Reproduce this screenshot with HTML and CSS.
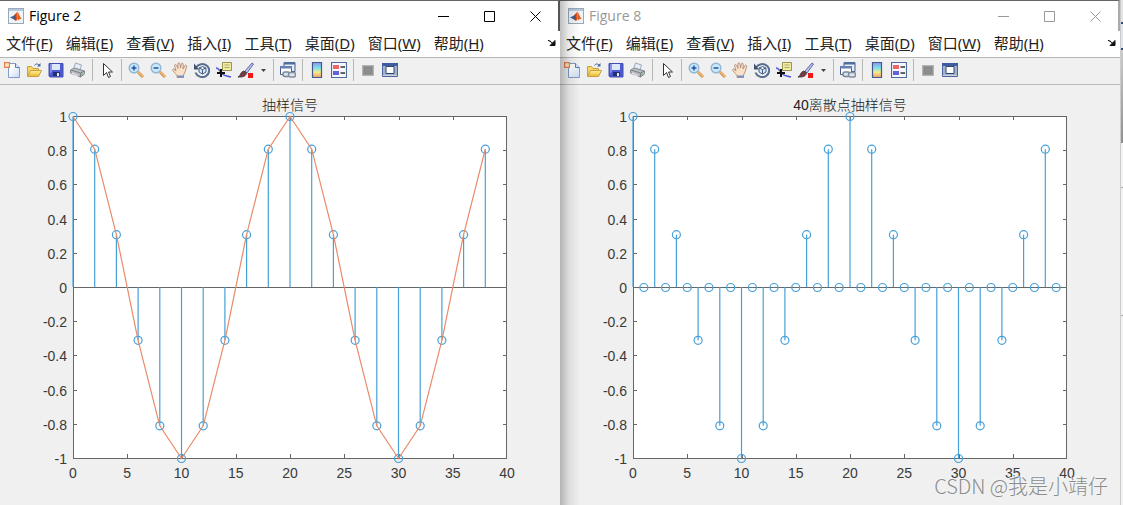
FILE: index.html
```html
<!DOCTYPE html>
<html lang="zh-CN">
<head>
<meta charset="utf-8">
<title>Figure 2</title>
<link rel="stylesheet" href="styles.css">
</head>
<body>
<svg class="defs" aria-hidden="true">
  <defs>
    <linearGradient id="paper" x1="0" y1="0" x2="1" y2="1"><stop offset="0.3" stop-color="#fff"/><stop offset="1" stop-color="#c5d8f2"/></linearGradient>
    <linearGradient id="folder" x1="0" y1="0" x2="0" y2="1"><stop offset="0" stop-color="#fff0a0"/><stop offset="1" stop-color="#e8b530"/></linearGradient>
    <linearGradient id="map" x1="0" y1="0" x2="0" y2="1"><stop offset="0" stop-color="#8796e8"/><stop offset="0.35" stop-color="#7de0ec"/><stop offset="0.65" stop-color="#f4ec8a"/><stop offset="1" stop-color="#f29a70"/></linearGradient>
    <linearGradient id="flame" x1="0" y1="0" x2="1" y2="0"><stop offset="0" stop-color="#7a1d12"/><stop offset="0.5" stop-color="#d9401c"/><stop offset="1" stop-color="#f08a30"/></linearGradient>
  </defs>
  <symbol id="i-logo" viewBox="0 0 16 16"><rect x=".5" y=".5" width="15" height="15" fill="#eef3f8" stroke="#9aa9b8"/><path d="M1 1h14v2H1z" fill="#b4c9dd"/><path d="M2 9.5 6 7.5l2 2-2 2z" fill="#2c67a5"/><path d="M6 7.5 9.5 3.500 10 11l-2 2-2-1.500 1-2z" fill="url(#flame)"/><path d="M9.500 3.500c1.500 2 2 5 4.500 8-1.500-.8-2.500-.5-4 1z" fill="#e0601f"/></symbol>
  <symbol id="i-new" viewBox="0 0 16 16"><path d="M4.500 1.500h7l4 4v10h-11z" fill="url(#paper)" stroke="#7f9cca"/><path d="M11.500 1.500v4h4" fill="#dce8f8" stroke="#587eb8"/><rect x=".5" y=".5" width="5" height="5" fill="#f7bc8d" stroke="#e37d54"/><path d="M3 1v4M1 3h4" stroke="#fff2bf"/></symbol>
  <symbol id="i-open" viewBox="0 0 16 16"><path d="M1.500 14.500v-10h4l1.500 2h5.500v2" fill="#f5d469" stroke="#c9a03c"/><path d="m1.500 14.500 3-6h11l-3 6z" fill="url(#folder)" stroke="#c9a03c"/><path d="M8.500 3.500c1-2 3-2 4.500-.5" fill="none" stroke="#416a9b"/><path d="M14.500 1v3.500H11z" fill="#416a9b"/></symbol>
  <symbol id="i-save" viewBox="0 0 16 16"><path d="M1 1.500h14v13.500h-13l-1-1z" fill="#4d5ad2" stroke="#4450b0"/><path d="M4 2h8v6H4z" fill="#dbe8fb"/><path d="M2 2h2v7L2 12z" fill="#8793ed"/><path d="M5 10h7v4H5z" fill="#252f69"/><path d="M9 11h2v3H9z" fill="#e7ebff"/></symbol>
  <symbol id="i-print" viewBox="0 0 16 16"><path d="m3.500 7 2-6 6 2-1.500 5z" fill="#e5edf8" stroke="#a0abc1"/><path d="m.5 8 4-2 10 3v3l-4 3-10-4z" fill="#b9bcc2" stroke="#858a92"/><path d="m1 8 9.500 3 4-2M10.500 11v4" fill="none" stroke="#7a7f87"/><path d="m2 11 6 3" stroke="#f5f5f5"/><path d="M11 12.500h2" stroke="#77b95b"/></symbol>
  <symbol id="i-arrow" viewBox="0 0 16 16"><path d="M4.500 1.500v12l3-3 2 5 2-1-2-4.500h4z" fill="#fff" stroke="#333"/></symbol>
  <symbol id="i-zin" viewBox="0 0 16 16"><path d="m10 10 5 5" stroke="#cf965a" stroke-width="3"/><path d="m10 9.500 5 5" stroke="#f2b76d" stroke-width="1.500"/><circle cx="6" cy="6" r="4.800" fill="#c9e9fa" stroke="#8fb5d6" stroke-width="1.400"/><path d="M3.500 6h5M6 3.500v5" stroke="#26519a" stroke-width="1.500"/></symbol>
  <symbol id="i-zout" viewBox="0 0 16 16"><path d="m10 10 5 5" stroke="#cf965a" stroke-width="3"/><path d="m10 9.500 5 5" stroke="#f2b76d" stroke-width="1.500"/><circle cx="6" cy="6" r="4.800" fill="#c9e9fa" stroke="#8fb5d6" stroke-width="1.400"/><path d="M3.500 6h5" stroke="#26519a" stroke-width="1.500"/></symbol>
  <symbol id="i-pan" viewBox="0 0 16 16"><path d="M5 15.500v-2C3 11 1 9 .5 7.500c1-1 2-.5 3.500 1.500L2.500 3.500c.2-1.300 1.500-1.300 2 0L6 6.500 5.800 2C6 .5 7.500.5 8 2l.5 4 .8-4c.5-1.300 2-1 2 .3L11 7l2-3.500c1-.8 2-.2 1.600 1.200L13 10l-1.500 3v2.500z" fill="#fae1c9" stroke="#b89480"/><path d="M5 14.500h7" stroke="#7290cb" stroke-width="2"/></symbol>
  <symbol id="i-rotate" viewBox="0 0 16 16"><path d="M2 5.500a7 6.500 0 1 1-.5 5" fill="none" stroke="#5b6f8e" stroke-width="2"/><path d="M0 1.500v6h5z" fill="#40546f"/><path d="m5 6 3.500-1.500L12 6v4l-3.500 2L5 10zM5 6l3.500 1.500L12 6M8.500 7.500V12" fill="#dbe8f7" stroke="#435e88"/></symbol>
  <symbol id="i-cursor" viewBox="0 0 16 16"><path d="M0 6c2 0 4 3 5 5 3 3 6 3 10 4" fill="none" stroke="#5454dd" stroke-width="1.400"/><path d="M6.500.5h9v8h-9z" fill="#f1eca0" stroke="#99934d"/><path d="M8.500 3h5M8.500 5.500h5" stroke="#aaa56c"/><path d="M5 7v8M1 11h8" stroke="#111" stroke-width="2"/></symbol>
  <symbol id="i-brush" viewBox="0 0 16 16"><path d="m7 9 7-8 1.500 1L9 11z" fill="#b5c6ed" stroke="#5e6aa6"/><path d="M0 15c3-1 2-5 6-6l2.500 2.500C7 15 4 15 0 15z" fill="#773d3d" stroke="#4d3540"/><path d="M10 11h5v5h-5z" fill="#f01818"/></symbol>
  <symbol id="i-link" viewBox="0 0 16 16"><path d="M4 .5h11v9H4z" fill="#e5effc" stroke="#435d8d"/><path d="M4 0h11v2.500H4z" fill="#526da2"/><path d="M.5 4.500h11v8H.5z" fill="#fff" stroke="#435d8d"/><path d="M0 4h12v2.500H0z" fill="#6680b4"/><rect x="3" y="10" width="7" height="4.500" rx="2" fill="#dde4eb" stroke="#758799" stroke-width="1.500"/><rect x="8.500" y="10.500" width="7" height="4.500" rx="2" fill="#dde4eb" stroke="#8090a0" stroke-width="1.500"/></symbol>
  <symbol id="i-colorbar" viewBox="0 0 16 16"><path d="M3.500.5h9v15h-9z" fill="url(#map)" stroke="#43598b" stroke-width="1.200"/></symbol>
  <symbol id="i-legend" viewBox="0 0 16 16"><path d="M.5.5h15v15H.5z" fill="#f7f9ff" stroke="#526a9e" stroke-width="1.200"/><path d="M2 3h6v4H2z" fill="#ee6666"/><path d="M2 9h6v4H2z" fill="#6262dc"/><path d="M9.500 5H14M9.500 11H14" stroke="#333" stroke-width="1.400"/></symbol>
  <symbol id="i-hide" viewBox="0 0 16 16"><path d="M2.500 3.500h11v10h-11z" fill="#999" stroke="#b0b0b0"/><path d="M4.500 5.500h7v6h-7z" fill="#8d8d8d" stroke="#858585"/></symbol>
  <symbol id="i-show" viewBox="0 0 16 16"><path d="M.5 1.500h15v13H.5z" fill="#a3b2d0" stroke="#4f659a"/><path d="M0 1h16v3H0z" fill="#405b9f"/><path d="M4 4.500h8v7H4z" fill="#fff" stroke="#34486f"/><path d="M1 13.500h14" stroke="#ced5e2"/></symbol>
</svg>

<main class="desktop">
  <section class="figure" data-name="Figure 2" data-title="抽样信号" data-step="2" data-curve="yes"></section>
  <section class="figure inactive" data-name="Figure 8" data-title="40离散点抽样信号" data-step="1"></section>
  <div class="behind"><div class="behind-top"></div><div class="behind-band"></div><div class="behind-list"></div><div class="behind-row"></div><div class="behind-row tall"></div></div>
  <div class="watermark">CSDN @我是小靖仔</div>
</main>
<script src="figure.js"></script>
</body>
</html>
```
FILE: styles.css
```css
* { box-sizing: border-box; }
body { margin: 0; background: #f0f0f0; font-family: "Noto Sans", "Noto Sans CJK SC", sans-serif; color: #000; }
button { font: inherit; color: inherit; background: none; border: 0; padding: 0; margin: 0; }
.defs { position: absolute; width: 0; height: 0; }
.desktop { position: relative; display: flex; min-height: 100vh; overflow: hidden; }
.figure { position: relative; flex: 1; min-width: 0; background: #f0f0f0; }
.figure.inactive::before { content: ""; position: absolute; z-index: 1; top: 0; bottom: 0; left: 0; width: 20px; background: linear-gradient(90deg, rgba(0,0,0,.25), rgba(0,0,0,.08) 45%, rgba(0,0,0,0)); pointer-events: none; }
.titlebar { display: flex; align-items: center; height: 31px; padding-left: 8px; background: #fff; border-top: 1px solid #666; border-right: 2px solid #555; }
.inactive .titlebar { color: #999; border-right-color: #aaa; }
.logo { width: 16px; height: 16px; }
.name { flex: 1; margin: 0 0 0 5px; font: 14px/20px "Open Sans", sans-serif; }
.control { width: 46px; height: 30px; display: grid; place-items: center; }
.control svg { width: 11px; height: 11px; }
.menubar { display: flex; align-items: center; gap: 13px; height: 26px; padding: 0 4px 2px 6px; background: #fff; font-size: 15px; line-height: 24px; color: #222; white-space: nowrap; }
.dock { width: 8px; height: 8px; margin-left: auto; display: flex; }
.dock svg { width: 8px; height: 8px; }
.toolbar { display: flex; align-items: center; height: 28px; padding: 0 0 2px 1px; background: #f0f0f0; border-top: 1px solid #b5b5b5; border-bottom: 1px solid #bbb; }
.tool { width: 22px; height: 24px; display: grid; place-items: center; }
.tool svg { width: 16px; height: 16px; }
.drop { width: 13px; height: 24px; display: grid; place-items: center; }
.drop svg { width: 5px; height: 3px; }
.sep { width: 7px; height: 22px; display: flex; justify-content: center; }
.sep::before { content: ""; width: 1px; background: #b8b8b8; }
.plot { display: block; width: 100%; height: auto; font-family: "Liberation Sans", Arial, sans-serif; }
.axes { fill: #fff; stroke: none; }
.frame { fill: none; stroke: #666; }
.tick-label { font-size: 14px; fill: #3a3a3a; }
.plot-title { font-family: "Liberation Sans", "Noto Sans CJK SC", sans-serif; font-size: 14px; font-weight: 300; fill: #222; }
.stem { stroke: #46a0d8; fill: none; stroke-width: 1.2; }
.curve { stroke: #ea8a68; fill: none; stroke-width: 1.2; }
.behind { display: flex; flex-direction: column; width: 3px; background: #f3f3f3; border-left: 1px solid #ccc; }
.behind-top { height: 22px; background: #e4e4e4; }
.behind-band { height: 28px; border-top: 2px solid #24507f; border-bottom: 2px solid #24507f; background: #dde6f0; }
.behind-list { height: 93px; background: linear-gradient(#ccc, #909090); }
.behind-row { height: 45px; border-bottom: 1px solid #aaa; }
.behind-row.tall { height: 128px; }
.watermark { position: absolute; z-index: 2; right: 15px; bottom: 5px; font: 300 20px/28px "Noto Sans CJK SC", sans-serif; color: #8c8c8c; text-shadow: -1px -1px 0 #f5f5f5; white-space: nowrap; }
```
FILE: figure.js
```js
const menus = [["文件", "F"], ["编辑", "E"], ["查看", "V"], ["插入", "I"], ["工具", "T"], ["桌面", "D"], ["窗口", "W"], ["帮助", "H"]];
const tools = ["new", "open", "save", "print", "|", "arrow", "|", "zin", "zout", "pan", "rotate", "cursor", "brush", "v", "|", "link", "|", "colorbar", "legend", "|", "hide", "show"];
const controls = [
  ["最小化", "M0 5.5h11"],
  ["最大化", "M.5.5h10v10H.5z"],
  ["关闭", "M.5.5l10 10M10.500.5l-10 10"]
];

// Axes box inside the plot's own coordinate system.
const box = { left: 73, top: 31, width: 434, height: 342 };
const px = n => box.left + n / 40 * box.width;
const py = v => box.top + (1 - v) / 2 * box.height;

function toolItem(t) {
  if (t === "|") return '<span class="sep"></span>';
  if (t === "v") return '<button class="drop" aria-label="brush options"><svg viewBox="0 0 5 3"><path d="M0 0h5L2.500 3z" fill="#444"/></svg></button>';
  return `<button class="tool" aria-label="${t}"><svg><use href="#i-${t}"/></svg></button>`;
}

function plot(title, step, curve) {
  const right = box.left + box.width, bottom = box.top + box.height;
  let ticks = "", labels = "", stems = "", points = [];
  for (let n = 0; n <= 40; n += 5) {
    const x = Math.round(px(n)) + (n < 40 ? 0.5 : -0.5);
    ticks += `M${x} ${bottom}v-4M${x} ${box.top}v4`;
    labels += `<text class="tick-label" x="${px(n)}" y="393" text-anchor="middle">${n}</text>`;
  }
  for (let k = -5; k <= 5; k++) {
    const y = Math.round(py(k / 5)) + 0.5;
    ticks += `M${box.left} ${y}h4M${right} ${y}h-4`;
    labels += `<text class="tick-label" x="67" y="${Math.round(py(k / 5)) + 6}" text-anchor="end">${k / 5}</text>`;
  }
  for (let n = 0; n < 40; n += step) {
    const v = n % 2 ? 0 : Math.cos(n * Math.PI / 10);
    const x = px(n), y = py(v) + 0.5;
    points.push(`${x},${y}`);
    stems += `<path class="stem" d="M${x} ${py(0)}V${y}"/><circle class="stem" cx="${x}" cy="${y}" r="4"/>`;
  }
  return `<svg class="plot" viewBox="0 0 560 420" role="img" aria-label="${title}">
    <rect class="axes" x="${box.left}" y="${box.top}" width="${box.width}" height="${box.height}"/>
    <path class="frame" d="M${box.left}.5 ${box.top}.5H${right - 0.5}V${bottom}.5H${box.left}.5zM${box.left} ${py(0)}.5H${right}${ticks}"/>
    ${stems}${curve ? `<polyline class="curve" points="${points.join(" ")}"/>` : ""}
    ${labels}<text class="plot-title" x="290" y="25" text-anchor="middle">${title}</text></svg>`;
}

document.querySelectorAll(".figure").forEach(f => {
  const { name, title, step, curve } = f.dataset;
  f.innerHTML = `<header class="titlebar"><svg class="logo"><use href="#i-logo"/></svg><h1 class="name">${name}</h1>
    ${controls.map(([label, d]) => `<button class="control" aria-label="${label}"><svg viewBox="0 0 11 11"><path d="${d}" fill="none" stroke="currentColor"/></svg></button>`).join("")}</header>
    <nav class="menubar">${menus.map(([t, k]) => `<button>${t}(<u>${k}</u>)</button>`).join("")}
    <button class="dock" aria-label="dock"><svg viewBox="0 0 8 8"><path d="M0 1.500c2 0 3 1 4.500 3M7 1.500v5H2z" fill="#111" stroke="#111"/></svg></button></nav>
    <div class="toolbar">${tools.map(toolItem).join("")}</div>${plot(title, Number(step), curve)}`;
});
```
